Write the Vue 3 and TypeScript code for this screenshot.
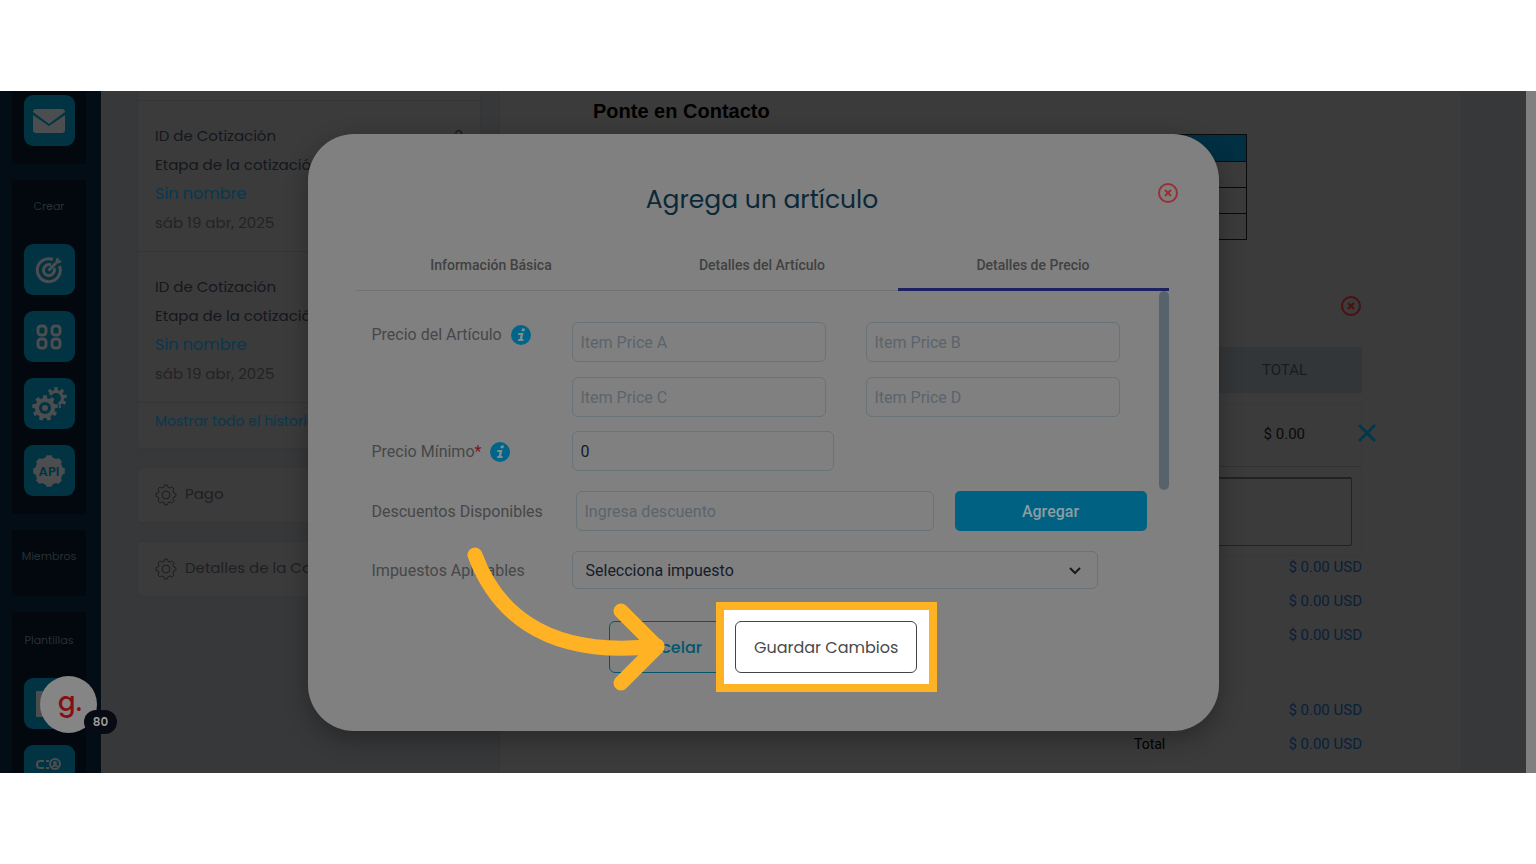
<script setup lang="ts">
import { ref } from 'vue'

interface Quote {
  id: number
  count: string
  name: string
  date: string
}

const quotes: Quote[] = [
  { id: 1, count: '2', name: 'Sin nombre', date: 'sáb 19 abr, 2025' },
  { id: 2, count: '1', name: 'Sin nombre', date: 'sáb 19 abr, 2025' },
]
const panels: string[] = ['Pago', 'Detalles de la Cotización']
const tabs: string[] = ['Información Básica', 'Detalles del Artículo', 'Detalles de Precio']
const activeTab = ref<number>(2)
const prices: string[] = ['A', 'B', 'C', 'D']
const minimum = ref<string>('0')
const subtotals: string[] = ['$ 0.00 USD', '$ 0.00 USD', '$ 0.00 USD']

function gearPath(cx: number, cy: number, r: number, depth: number, teeth: number): string {
  const pts: string[] = []
  const step = (Math.PI * 2) / teeth
  for (let i = 0; i < teeth; i++) {
    const a = i * step - Math.PI / 2
    const corners: [number, number][] = [
      [-0.32, r - depth],
      [-0.2, r],
      [0.2, r],
      [0.32, r - depth],
    ]
    for (const [k, d] of corners) {
      pts.push(`${(cx + Math.cos(a + k * step) * d).toFixed(2)} ${(cy + Math.sin(a + k * step) * d).toFixed(2)}`)
    }
  }
  return `M${pts.join('L')}Z`
}
const gearOutline = gearPath(12, 12, 10, 2, 8)
const gearLarge = gearPath(15, 23, 13, 3, 9)
const gearSmall = gearPath(26, 13, 11, 3, 9)
const gearApi = gearPath(17, 17, 16, 2, 8)
</script>

<template>
  <main class="stage">
    <nav class="sidebar" aria-label="Principal">
      <section class="group first">
        <button class="tile" type="button" aria-label="Correo">
          <svg width="32" height="24" viewBox="0 0 32 24">
            <path d="M3 0h26q3 0 3 3L16 15 0 3q0-3 3-3z" />
            <path d="M0 6l16 11L32 6v15q0 3-3 3H3q-3 0-3-3z" />
          </svg>
        </button>
      </section>
      <section class="group create">
        <h2>Crear</h2>
        <button class="tile" type="button" aria-label="Objetivo">
          <svg width="28" height="28" viewBox="0 0 28 28" class="line">
            <path d="M18 3.500A11.500 11.500 0 1 0 24.500 10" />
            <path d="M16 9A5.500 5.500 0 1 0 19 12" />
            <path d="M13.500 14.500L21 7" />
            <path d="M20 8l1-5 2-2 1 3 3 1-2 2z" class="solid" />
          </svg>
        </button>
        <button class="tile" type="button" aria-label="Aplicaciones">
          <svg width="26" height="26" viewBox="0 0 26 26" class="line">
            <rect x="2" y="2" width="8" height="9" rx="3" />
            <rect x="16" y="2" width="8" height="9" rx="3" />
            <rect x="2" y="15" width="8" height="9" rx="3" />
            <rect x="16" y="15" width="8" height="9" rx="3" />
          </svg>
        </button>
        <button class="tile" type="button" aria-label="Ajustes">
          <svg width="38" height="38" viewBox="0 0 38 38">
            <path :d="gearSmall" />
            <circle cx="26" cy="13" r="5" class="hole" />
            <circle cx="15" cy="23" r="14" class="hole" />
            <path :d="gearLarge" />
            <circle cx="15" cy="23" r="6" class="hole" />
            <circle cx="15" cy="23" r="3" />
          </svg>
        </button>
        <button class="tile api" type="button" aria-label="API">
          <svg width="34" height="34" viewBox="0 0 34 34">
            <path :d="gearApi" />
            <text x="17" y="22" text-anchor="middle">API</text>
          </svg>
        </button>
      </section>
      <section class="group members"><h2>Miembros</h2></section>
      <section class="group templates">
        <h2>Plantillas</h2>
        <button class="tile" type="button" aria-label="Documento">
          <svg width="26" height="26" viewBox="0 0 26 26"><rect width="26" height="26" rx="1" /></svg>
        </button>
        <button class="tile" type="button" aria-label="Flujo">
          <svg width="26" height="26" viewBox="0 0 26 26" class="line thin">
            <path d="M8 3H4q-3 0-3 3.500T4 10h4M10 3h3M10 10h3" />
            <circle cx="19" cy="6" r="5" />
            <circle cx="19" cy="5" r="1" />
            <path d="M16 9q3-3 6 0" />
            <rect x="5" y="16" width="13" height="7" rx="3" />
          </svg>
        </button>
      </section>
    </nav>

    <div class="page">
      <aside class="history">
        <section class="card quotes">
          <article v-for="q in quotes" :key="q.id" class="quote">
            <p><span>ID de Cotización</span><span>{{ q.count }}</span></p>
            <p>Etapa de la cotización</p>
            <p><a href="#" class="name">{{ q.name }}</a></p>
            <p class="date">{{ q.date }}</p>
          </article>
          <a href="#" class="all">Mostrar todo el historial</a>
        </section>
        <section v-for="p in panels" :key="p" class="card panel">
          <svg width="24" height="24" viewBox="0 0 24 24">
            <path :d="gearOutline" />
            <circle cx="12" cy="12" r="4" />
          </svg>
          <span>{{ p }}</span>
        </section>
      </aside>

      <section class="document">
        <h2>Ponte en Contacto</h2>
        <table class="contact">
          <thead><tr><th></th></tr></thead>
          <tbody><tr v-for="n in 3" :key="n"><td></td></tr></tbody>
        </table>
        <button class="round-close remove" type="button" aria-label="Quitar sección">
          <svg width="22" height="22" viewBox="0 0 22 22">
            <circle cx="11" cy="11" r="9" /><path d="M8 8l6 6M14 8l-6 6" />
          </svg>
        </button>
        <div class="items-head"><span>TOTAL</span></div>
        <div class="items-body">
          <div class="item">
            <span>$ 0.00</span>
            <button type="button" class="delete" aria-label="Eliminar artículo">
              <svg width="20" height="20" viewBox="0 0 20 20"><path d="M2 2l16 16M18 2L2 18" /></svg>
            </button>
          </div>
          <div class="note"><textarea aria-label="Descripción"></textarea></div>
        </div>
        <dl class="sums">
          <div v-for="(s, i) in subtotals" :key="i"><dt></dt><dd>{{ s }}</dd></div>
          <div class="apart"><dt></dt><dd>$ 0.00 USD</dd></div>
          <div><dt>Total</dt><dd>$ 0.00 USD</dd></div>
        </dl>
      </section>
    </div>
    <div class="scrollbar"></div>

    <div class="assistant">
      <span class="letter">g.</span>
      <span class="badge">80</span>
    </div>

    <div class="overlay">
      <form class="modal" role="dialog" aria-labelledby="modal-title" @submit.prevent>
        <h1 id="modal-title">Agrega un artículo</h1>
        <button class="round-close dismiss" type="button" aria-label="Cerrar">
          <svg width="22" height="22" viewBox="0 0 22 22">
            <circle cx="11" cy="11" r="9" /><path d="M8 8l6 6M14 8l-6 6" />
          </svg>
        </button>
        <div class="tabs" role="tablist">
          <button
            v-for="(t, i) in tabs"
            :key="t"
            type="button"
            role="tab"
            :aria-selected="activeTab === i"
            :class="{ active: activeTab === i }"
            @click="activeTab = i"
          >{{ t }}</button>
        </div>
        <div class="fields">
          <div class="thumb"></div>
          <div class="row top">
            <label for="price-A">Precio del Artículo
              <svg width="22" height="22" viewBox="0 0 22 22" class="info">
                <circle cx="11" cy="11" r="10" />
                <path d="M12 4.500h3l-.6 2.800h-3zM8.500 9h5l-1.400 6h1.600l-.4 2H8l.4-2h1.300l.9-4H8z" />
              </svg>
            </label>
            <div class="prices">
              <input v-for="p in prices" :id="`price-${p}`" :key="p" type="text" :placeholder="`Item Price ${p}`" :aria-label="`Item Price ${p}`" />
            </div>
          </div>
          <div class="row">
            <label for="minimum"><span>Precio Mínimo<b>*</b></span>
              <svg width="22" height="22" viewBox="0 0 22 22" class="info">
                <circle cx="11" cy="11" r="10" />
                <path d="M12 4.500h3l-.6 2.800h-3zM8.500 9h5l-1.400 6h1.600l-.4 2H8l.4-2h1.300l.9-4H8z" />
              </svg>
            </label>
            <input id="minimum" v-model="minimum" type="text" class="minimum" />
          </div>
          <div class="row spaced">
            <label for="discount">Descuentos Disponibles</label>
            <input id="discount" type="text" class="discount" placeholder="Ingresa descuento" />
            <button type="button" class="add">Agregar</button>
          </div>
          <div class="row spaced">
            <label for="tax">Impuestos Aplicables</label>
            <div class="select">
              <select id="tax"><option>Selecciona impuesto</option></select>
              <svg width="12" height="8" viewBox="0 0 12 8"><path d="M1 1l5 5 5-5" /></svg>
            </div>
          </div>
        </div>
        <div class="actions">
          <button type="button" class="cancel">Cancelar</button>
          <div class="spotlight"><button type="submit">Guardar Cambios</button></div>
        </div>
        <svg class="arrow" width="210" height="156" viewBox="0 0 210 156" aria-hidden="true">
          <path d="M12 11C30 60 75 116 194 102" />
          <path d="M158 67L194 103L158 139" />
        </svg>
      </form>
    </div>
  </main>
</template>

<style>
body {
  margin: 0;
  background: #fff;
}
</style>

<style scoped>
* {
  box-sizing: border-box;
}
h1, h2, p, dl, dd {
  margin: 0;
}
button, input, select, textarea {
  font: inherit;
  color: inherit;
  margin: 0;
}
button {
  cursor: pointer;
}
a {
  text-decoration: none;
}
.stage {
  position: relative;
  display: flex;
  height: calc(100vh - 182px);
  margin: 91px 0;
  overflow: hidden;
  background: #37383a;
  font-family: Roboto, "Liberation Sans", sans-serif;
  font-size: 16px;
}
.sidebar {
  flex: none;
  display: flex;
  flex-direction: column;
  width: 101px;
  padding: 0 15px 0 12px;
  background: #030d15;
  font-family: Poppins, Inter, sans-serif;
}
.group {
  flex: none;
  display: flex;
  flex-direction: column;
  align-items: center;
  gap: 16px;
  margin-bottom: 16px;
  background: #02080d;
}
.group h2 {
  color: #283036;
  font-size: 11px;
  font-weight: 400;
  line-height: 16px;
}
.first {
  padding: 4px 0 18px;
}
.create {
  padding: 18px 0;
}
.create h2, .templates h2 {
  margin-bottom: 14px;
}
.members {
  height: 66px;
  padding-top: 18px;
}
.templates {
  padding-top: 20px;
}
.tile {
  display: grid;
  place-items: center;
  width: 51px;
  height: 51px;
  padding: 0;
  border: 0;
  border-radius: 9px;
  background: #013343;
}
.tile svg {
  fill: #4b4d4f;
}
.tile .line {
  fill: none;
  stroke: #4b4d4f;
  stroke-width: 3;
}
.tile .thin {
  stroke-width: 2;
}
.tile .solid {
  fill: #4b4d4f;
  stroke: none;
}
.tile .hole {
  fill: #013343;
}
.api text {
  fill: #013343;
  font-size: 13px;
  font-weight: 600;
}
.page {
  flex: 1;
  display: flex;
  gap: 18px;
  min-width: 0;
  padding: 0 64px 0 35px;
  border-left: 1px solid #3b3b3b;
}
.history {
  flex: none;
  display: flex;
  flex-direction: column;
  gap: 18px;
  width: 344px;
  font-family: Poppins, Inter, sans-serif;
  font-size: 15px;
}
.card {
  border: 1px solid #343637;
  border-radius: 4px;
  background: #3b3b3b;
}
.quotes {
  height: 358px;
  border-top: 0;
  border-radius: 0 0 4px 4px;
  padding-top: 9px;
}
.quote {
  height: 151px;
  padding: 20px 17px 0;
  border-top: 1px solid #333536;
  color: #14171d;
}
.quote p {
  display: flex;
  justify-content: space-between;
  height: 29px;
  line-height: 29px;
}
.quote .name, .all {
  color: #08384f;
}
.quote .name {
  font-size: 16px;
}
.quote .date {
  color: #232323;
}
.all {
  display: block;
  padding: 0 17px;
  border-top: 1px solid #333536;
  font-size: 14px;
  line-height: 36px;
}
.panel {
  display: flex;
  align-items: center;
  gap: 7px;
  height: 56px;
  padding: 0 16px;
  color: #1e2022;
}
.panel svg {
  fill: none;
  stroke: #1b1e20;
}
.panel span {
  padding-bottom: 3px;
}
.document {
  flex: 1;
  min-width: 0;
  padding: 8px 99px 0 93px;
  border: solid #343637;
  border-width: 0 1px;
  background: #3b3b3b;
}
.document h2 {
  color: #000;
  font: bold 20px/24px "Liberation Sans", Arial, sans-serif;
}
.contact {
  width: 654px;
  margin-top: 11px;
  border-collapse: collapse;
}
.contact th, .contact td {
  height: 26px;
  padding: 0;
  border: 1px solid #0a0a0a;
}
.contact th {
  height: 27px;
  background: #013043;
}
.round-close {
  display: block;
  padding: 0;
  border: 0;
  background: none;
}
.round-close svg {
  display: block;
  fill: none;
  stroke: #9a2f31;
  stroke-width: 2;
}
.remove {
  margin: 55px 0 30px auto;
}
.remove svg {
  stroke: #4a1012;
}
.items-head {
  display: flex;
  justify-content: flex-end;
  padding: 0 55px;
  background: #333638;
  color: #181b1e;
  font-size: 15px;
  line-height: 46px;
}
.items-body {
  margin-top: 10px;
  border: 1px solid #373838;
}
.item {
  position: relative;
  display: flex;
  justify-content: flex-end;
  height: 63px;
  padding-right: 56px;
  border-bottom: 1px solid #313333;
  color: #0a0a0a;
  font-size: 15px;
  line-height: 60px;
}
.delete {
  position: absolute;
  top: 19px;
  right: -16px;
  padding: 0;
  border: 0;
  background: none;
}
.delete svg {
  display: block;
  fill: none;
  stroke: #01394c;
  stroke-width: 3;
}
.note {
  padding: 10px 9px 9px;
}
.note textarea {
  display: block;
  width: 100%;
  height: 69px;
  border: 1px solid #222;
  border-top-width: 2px;
  border-radius: 2px;
  background: transparent;
  resize: none;
}
.sums {
  margin-top: -6px;
  color: #08203a;
  font-size: 15px;
  line-height: 34px;
}
.sums div {
  display: flex;
  justify-content: flex-end;
}
.sums dt {
  width: 154px;
  color: #000;
  font-size: 14px;
}
.sums dd {
  width: 74px;
  text-align: right;
  white-space: nowrap;
}
.sums .apart {
  margin-top: 41px;
}
.scrollbar {
  flex: none;
  width: 10px;
  background: #808080;
}
.assistant {
  position: absolute;
  left: 40px;
  bottom: 40px;
  display: grid;
  place-items: center;
  width: 57px;
  height: 57px;
  border-radius: 50%;
  background: #858585;
  font-family: Poppins, Inter, sans-serif;
}
.letter {
  margin-bottom: 6px;
  padding-left: 3px;
  color: #860d12;
  font-size: 26px;
  font-weight: 500;
  line-height: 32px;
}
.badge {
  position: absolute;
  left: 44px;
  bottom: -1px;
  width: 33px;
  border-radius: 12px;
  background: #080a14;
  color: #9a9a9e;
  font-size: 12px;
  font-weight: 600;
  line-height: 24px;
  text-align: center;
}
.overlay {
  position: absolute;
  inset: 0 10px 0 0;
  display: flex;
  justify-content: center;
  align-items: flex-start;
  padding: 43px 16px 0;
}
.modal {
  position: relative;
  width: 911px;
  padding: 0 50px 58px 48px;
  border-radius: 46px;
  background: #808080;
  box-shadow: 0 8px 24px rgba(0, 0, 0, 0.3);
}
.modal h1 {
  padding-top: 48px;
  color: #0b2838;
  font: 400 25px/36px Poppins, Inter, sans-serif;
  text-align: center;
}
.dismiss {
  position: absolute;
  top: 48px;
  right: 40px;
}
.tabs {
  display: flex;
  margin-top: 23px;
  border-bottom: 1px solid #707375;
}
.tabs button {
  flex: 1;
  height: 50px;
  margin-bottom: -1px;
  padding: 0;
  border: 0;
  border-bottom: 3px solid transparent;
  background: none;
  color: #414141;
  font-size: 14px;
  font-weight: 500;
}
.tabs .active {
  border-bottom-color: #1c2161;
}
.fields {
  position: relative;
  padding: 31px 0 0 16px;
}
.thumb {
  position: absolute;
  top: 0;
  right: 0;
  width: 10px;
  height: 199px;
  border-radius: 5px;
  background: #57636c;
}
.row {
  display: flex;
  align-items: center;
  margin-bottom: 14px;
  color: #464748;
}
.top {
  align-items: flex-start;
}
.spaced {
  margin: 20px 0;
}
label {
  flex: none;
  display: flex;
  align-items: center;
  gap: 8px;
  width: 200px;
  padding-top: 2px;
  line-height: 22px;
}
label b {
  color: #7c1420;
  font-weight: 400;
}
.info circle {
  fill: #006589;
}
.info path {
  fill: #808e94;
}
input, select {
  height: 40px;
  padding: 0 8px;
  border: 1px solid #687277;
  border-radius: 6px;
  background: transparent;
  color: #151c28;
}
input::placeholder {
  color: #5b646c;
  opacity: 1;
}
.prices {
  display: grid;
  grid-template-columns: 1fr 1fr;
  gap: 15px 40px;
  width: 548px;
}
.prices input {
  min-width: 0;
}
.minimum {
  width: 262px;
}
.discount {
  width: 358px;
  margin: 0 21px 0 4px;
}
.add {
  width: 192px;
  height: 40px;
  border: 0;
  border-radius: 5px;
  background: #006182;
  color: #8c9da3;
  font-weight: 500;
}
.select {
  position: relative;
  width: 526px;
}
select {
  appearance: none;
  display: block;
  width: 100%;
  height: 38px;
  padding: 0 13px;
}
.select svg {
  position: absolute;
  top: 16px;
  right: 17px;
  fill: none;
  stroke: #161a1e;
  stroke-width: 2;
  pointer-events: none;
}
.actions {
  display: flex;
  justify-content: center;
  gap: 14px;
  margin-top: 32px;
  padding-left: 2px;
  font-family: Poppins, Inter, sans-serif;
}
.actions button {
  height: 52px;
  padding: 0 18px;
  border: 1px solid #444;
  border-radius: 6px;
  background: #fff;
  color: #4a4a4a;
}
.actions .cancel {
  border-color: #04566d;
  background: none;
  color: #04566d;
  font-weight: 500;
}
.spotlight {
  position: relative;
}
.spotlight::before {
  content: "";
  position: absolute;
  inset: -19px -20px -19px -19px;
  border: 8px solid #ffb224;
  background: #fff;
}
.spotlight button {
  position: relative;
}
.arrow {
  position: absolute;
  top: 410px;
  left: 155px;
  fill: none;
  stroke: #ffb224;
  stroke-width: 15;
  stroke-linecap: round;
  stroke-linejoin: round;
  pointer-events: none;
}
</style>
